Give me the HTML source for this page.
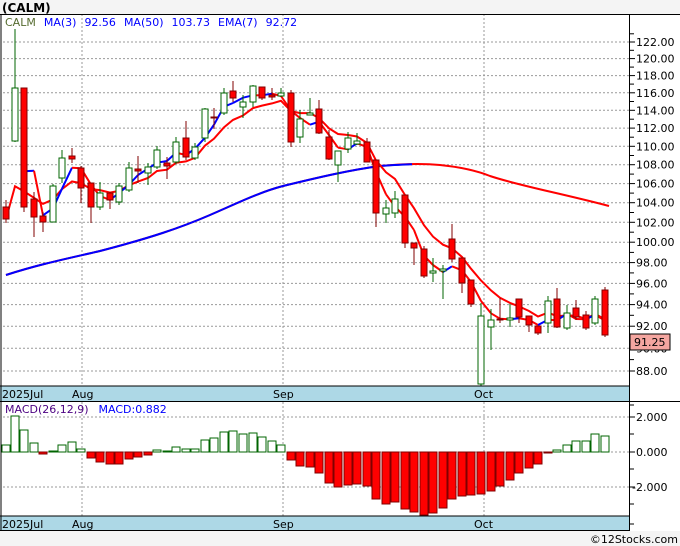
<!DOCTYPE html>
<html><head><meta charset="utf-8"><style>
body{margin:0;background:#f4f4f4;width:680px;height:546px;overflow:hidden;font-family:"Liberation Sans","DejaVu Sans",sans-serif}
svg{position:absolute;left:0;top:0}
</style></head><body>
<svg id="s" width="680" height="546" xmlns="http://www.w3.org/2000/svg" font-family="DejaVu Sans, Liberation Sans, sans-serif"></svg>
<script>
const s=document.getElementById('s');let h='';
h+='<rect x="0" y="0" width="680" height="546" fill="#f4f4f4"/>';
h+='<text x="2" y="12" font-size="12" font-weight="bold" fill="#000">(CALM)</text>';
h+='<rect x="0" y="14" width="680" height="517" fill="#fff"/>';
function hl(y,x2){return '<line x1="3" y1="'+y+'" x2="'+x2+'" y2="'+y+'" stroke="#999" stroke-dasharray="2,2"/>';}
const P=p=>42+1007*(Math.log(122)-Math.log(p));
for(let p=88;p<=122;p+=2){const y=P(p);h+=hl(y.toFixed(1),629);}
[82,283,484].forEach(x=>{h+='<line x1="'+x+'" y1="14" x2="'+x+'" y2="386" stroke="#999" stroke-dasharray="2,2"/><line x1="'+x+'" y1="402" x2="'+x+'" y2="516" stroke="#999" stroke-dasharray="2,2"/>';});
[417,452,487].forEach(y=>h+=hl(y,629));
const C=[[6,207,219,200,223,0],[15,88,141,29,142,1],[24,88,207,88,212,0],[34,199,217,192,237,0],[43,216,222,212,232,0],[53,186,222,184,222,1],[62,158,178,150,183,1],[72,156,159,148,163,0],[81,168,188,166,203,0],[91,183,207,183,223,0],[100,193,207,182,210,1],[110,193,200,192,209,0],[119,186,202,183,205,1],[129,168,190,162,192,1],[138,169,171,156,183,0],[148,167,173,163,185,1],[157,150,167,146,169,1],[167,163,166,157,179,0],[176,142,162,137,164,1],[186,138,157,121,160,0],[195,147,158,143,160,1],[205,109,138,108,142,1],[214,117,118,108,129,0],[224,93,113,88,115,1],[233,91,98,81,102,0],[243,102,107,95,118,1],[253,86,102,85,107,1],[262,87,98,87,100,0],[272,95,97,88,100,0],[281,93,96,88,97,1],[291,93,142,90,147,0],[300,119,137,110,143,1],[310,113,115,98,115,1],[319,109,133,100,134,0],[329,137,159,130,160,0],[338,151,165,152,182,1],[348,138,149,132,153,1],[357,141,144,133,145,1],[367,142,162,138,162,0],[376,160,213,160,227,0],[386,208,214,200,223,1],[395,199,213,191,218,1],[405,195,243,195,248,0],[414,243,248,243,265,0],[424,249,276,246,278,0],[433,271,273,258,282,1],[443,269,271,265,299,1],[452,239,259,224,262,0],[462,258,283,258,293,0],[471,280,304,280,307,0],[481,316,384,303,387,1],[491,320,327,309,350,1],[500,319,320,298,323,0],[510,318,320,304,327,1],[519,299,317,299,323,0],[529,316,325,316,332,0],[538,326,333,326,335,0],[548,301,323,296,333,1],[557,299,327,288,328,0],[567,313,328,305,330,1],[576,308,317,300,320,0],[586,315,328,311,330,0],[595,299,323,296,325,1],[605,290,335,287,337,0]];
h+='<path d="M6,275 C40,264 70,258 100,251 C150,238 180,228 210,215 C240,202 260,192 283,186 C320,177 350,170 380,166 C400,164 420,163 440,165 C460,167 475,170 490,176 C520,186 560,193 609,206" fill="none" stroke="#ff0000" stroke-width="2"/>';
h+='<path d="M6,275 C40,264 70,258 100,251 C150,238 180,228 210,215 C240,202 260,192 283,186 C320,177 350,170 380,166 C395,165 405,164.5 412,164.3" fill="none" stroke="#0000ff" stroke-width="2"/>';
const cl=C.map(c=>c[5]?c[1]:c[2]);
let e=cl[0],ep=[];const k=2/8;
cl.forEach((v,i)=>{e=i?v*k+e*(1-k):v;ep.push(C[i][0]+','+e.toFixed(1));});
h+='<polyline points="'+ep.join(' ')+'" fill="none" stroke="#ff0000" stroke-width="2"/>';
let ma=[];for(let i=2;i<cl.length;i++)ma.push([C[i][0],(cl[i]+cl[i-1]+cl[i-2])/3]);
for(let i=1;i<ma.length;i++){const up=ma[i][1]<ma[i-1][1];h+='<line x1="'+ma[i-1][0]+'" y1="'+ma[i-1][1].toFixed(1)+'" x2="'+ma[i][0]+'" y2="'+ma[i][1].toFixed(1)+'" stroke="'+(up?'#0000ff':'#ff0000')+'" stroke-width="2"/>';}
C.forEach(c=>{const[x,bt,bb,wt,wb,g]=c;const col=g?'#006400':'#800000';
h+='<line x1="'+x+'" y1="'+wt+'" x2="'+x+'" y2="'+wb+'" stroke="'+col+'"/>';
h+='<rect x="'+(x-3)+'" y="'+bt+'" width="6" height="'+Math.max(1,bb-bt)+'" fill="'+(g?'#fff':'#ff0000')+'" stroke="'+col+'"/>';});
h+='<text x="5" y="26" font-size="11"><tspan fill="#556b2f">CALM</tspan><tspan fill="#0000ff" dx="8">MA(3)</tspan><tspan fill="#0000ff" dx="8">92.56</tspan><tspan fill="#0000ff" dx="8">MA(50)</tspan><tspan fill="#0000ff" dx="8">103.73</tspan><tspan fill="#0000ff" dx="8">EMA(7)</tspan><tspan fill="#0000ff" dx="8">92.72</tspan></text>';
const M=[445,416,430,443,454,451,445,442,449,458,462,464,464,459,457,455,450,451,447,449,449,440,438,432,431,434,433,437,441,445,460,466,467,473,483,487,485,484,486,499,504,502,509,512,515,513,508,499,496,495,494,491,486,480,473,468,464,453,450,445,441,441,434,436];
M.forEach((v,i)=>{const x=C[i][0];if(v<452){h+='<rect x="'+(x-4)+'" y="'+v+'" width="8" height="'+(452-v)+'" fill="#fff" stroke="#006400"/>';}else{h+='<rect x="'+(x-4)+'" y="452" width="8" height="'+Math.max(1,v-452)+'" fill="#ff0000" stroke="#800000"/>';}});
h+='<text x="5" y="413" font-size="11"><tspan fill="#4b0082">MACD(26,12,9)</tspan><tspan fill="#0000ff" dx="10">MACD:0.882</tspan></text>';
h+='<rect x="0" y="386" width="630" height="15" fill="#add8e6"/><line x1="0" y1="386" x2="630" y2="386" stroke="#000"/>';
h+='<rect x="0" y="516" width="630" height="15" fill="#add8e6"/><line x1="0" y1="516" x2="630" y2="516" stroke="#000"/>';
[[2,'2025Jul'],[72,'Aug'],[273,'Sep'],[474,'Oct']].forEach(d=>{h+='<text x="'+d[0]+'" y="398" font-size="11" fill="#000">'+d[1]+'</text><text x="'+d[0]+'" y="528" font-size="11" fill="#000">'+d[1]+'</text>';});
h+='<line x1="0" y1="14.5" x2="680" y2="14.5" stroke="#000"/><line x1="0" y1="401.5" x2="680" y2="401.5" stroke="#000"/><line x1="0" y1="530.5" x2="630" y2="530.5" stroke="#000"/>';
h+='<line x1="1" y1="14" x2="1" y2="531" stroke="#000"/><line x1="629.5" y1="14" x2="629.5" y2="531" stroke="#000"/>';
for(let p=88;p<=122;p+=2){const y=P(p);h+='<line x1="630" y1="'+y.toFixed(1)+'" x2="635" y2="'+y.toFixed(1)+'" stroke="#000"/>';const y2=P(p+1);h+='<line x1="630" y1="'+y2.toFixed(1)+'" x2="634" y2="'+y2.toFixed(1)+'" stroke="#000"/>';h+='<text x="636" y="'+(y+4).toFixed(1)+'" font-size="11" fill="#000">'+p.toFixed(2)+'</text>';}
[[417,'2.000'],[452,'0.000'],[487,'-2.000']].forEach(a=>{h+='<line x1="630" y1="'+a[0]+'" x2="635" y2="'+a[0]+'" stroke="#000"/><text x="'+(a[1][0]=='-'?632:636)+'" y="'+(a[0]+4)+'" font-size="11" fill="#000">'+a[1]+'</text>';});
[405,434,469,504,524].forEach(y=>h+='<line x1="630" y1="'+y+'" x2="634" y2="'+y+'" stroke="#000"/>');
h+='<rect x="630" y="334" width="40" height="16" fill="#f4a6a0" stroke="#000"/><text x="634" y="346" font-size="11" fill="#000">91.25</text>';
h+='<text x="678" y="543" font-size="11" fill="#000" text-anchor="end">©12Stocks.com</text>';
s.innerHTML=h;
</script>
</body></html>
